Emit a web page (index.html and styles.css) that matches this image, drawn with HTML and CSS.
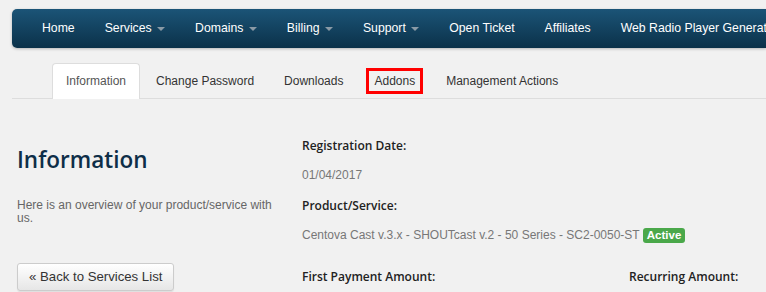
FILE: index.html
```html
<!DOCTYPE html>
<html>
<head>
    <title>Product Details</title>
    <link rel="stylesheet" href="styles.css">
</head>
<body>
    <div class="navbar">
        <ul class="nav">
            <li>Home</li>
            <li>Services <span class="caret"></span></li>
            <li>Domains <span class="caret"></span></li>
            <li>Billing <span class="caret"></span></li>
            <li>Support <span class="caret"></span></li>
            <li>Open Ticket</li>
            <li>Affiliates</li>
            <li>Web Radio Player Generator</li>
        </ul>
    </div>

    <ul class="tabs">
        <li class="tab active">Information</li>
        <li class="tab">Change Password</li>
        <li class="tab">Downloads</li>
        <li class="tab"><span class="marked">Addons</span></li>
        <li class="tab">Management Actions</li>
    </ul>

    <div class="content">
        <div class="intro">
            <h1>Information</h1>
            <p class="lead">Here is an overview of your product/service with us.</p>
            <button class="back-btn">&laquo; Back to Services List</button>
        </div>

        <div class="details">
            <p class="label">Registration Date:</p>
            <p class="value">01/04/2017</p>

            <p class="label">Product/Service:</p>
            <p class="value">Centova Cast v.3.x - SHOUTcast v.2 - 50 Series - SC2-0050-ST <span class="badge">Active</span></p>

            <div class="amounts">
                <p class="label">First Payment Amount:</p>
                <p class="label">Recurring Amount:</p>
            </div>
        </div>
    </div>
</body>
</html>
```

FILE: styles.css
```css
body {
    margin: 0;
    background-color: #f1f1f1;
    font-family: "Liberation Sans", Arial, sans-serif;
    font-size: 13px;
    color: #333;
    overflow: hidden;
}

.navbar {
    margin: 9px 0 0 12px;
    height: 39px;
    border-radius: 5px 0 0 5px;
    background: linear-gradient(to bottom, #1b5477, #0b3149);
    box-shadow: 0 1px 3px rgba(0,0,0,0.25);
    overflow: hidden;
}

.nav {
    list-style: none;
    margin: 0;
    padding: 0 15px;
    display: flex;
    white-space: nowrap;
}

.nav li {
    padding: 0 15px;
    line-height: 39px;
    color: #fff;
    font-size: 12.25px;
}

.caret {
    display: inline-block;
    width: 0;
    height: 0;
    margin-left: 2px;
    vertical-align: middle;
    border-top: 4px solid #8a9aa6;
    border-left: 4px solid transparent;
    border-right: 4px solid transparent;
}

.tabs {
    list-style: none;
    margin: 15px 0 0 12px;
    padding: 0 0 0 40px;
    display: flex;
    border-bottom: 1px solid #ddd;
    height: 35px;
}

.tab {
    padding: 0 13px;
    margin-right: 2px;
    line-height: 35px;
    font-size: 12px;
    color: #333;
    border: 1px solid transparent;
    border-bottom: none;
    border-radius: 4px 4px 0 0;
}

.tab.active {
    background-color: #fff;
    border-color: #ddd;
    color: #555;
    height: 35px;
    margin-bottom: -1px;
}

.marked {
    border: 3px solid #f00;
    padding: 3px 5px;
    line-height: 15px;
    margin: 0 -7px;
}

.content {
    display: flex;
    padding-left: 17px;
}

.intro {
    width: 262px;
    flex: 0 0 262px;
    margin-right: 23px;
    padding-top: 48px;
}

h1 {
    margin: 0;
    font-family: "Open Sans", sans-serif;
    font-weight: 600;
    font-size: 22.5px;
    line-height: 26px;
    color: #0e2e48;
}

.lead {
    margin: 26px 0 0;
    font-size: 12px;
    line-height: 13px;
    color: #666;
}

.back-btn {
    margin-top: 38px;
    padding: 3px 11px;
    font-family: "Liberation Sans", Arial, sans-serif;
    font-size: 13.2px;
    line-height: 20px;
    color: #333;
    background: linear-gradient(to bottom, #fff, #e6e6e6);
    border: 1px solid #ccc;
    border-radius: 3px;
    box-shadow: 0 1px 1px rgba(0,0,0,0.08);
}

.details {
    flex: 1;
    padding-top: 37px;
}

.details p {
    margin: 0;
    line-height: 20px;
}

.label {
    font-family: "Open Sans", sans-serif;
    font-weight: 600;
    font-size: 12px;
    color: #222;
    margin-bottom: 9px !important;
}

.value {
    font-size: 12px;
    color: #777;
    margin-bottom: 11px !important;
}

.value + .amounts {
    margin-top: 22px;
}

.badge {
    display: inline-block;
    padding: 0 4px;
    line-height: 15px;
    font-size: 11.5px;
    font-weight: bold;
    color: #fff;
    background-color: #4aa84a;
    border-radius: 3px;
}

.amounts {
    display: grid;
    grid-template-columns: 327px 1fr;
}
```
